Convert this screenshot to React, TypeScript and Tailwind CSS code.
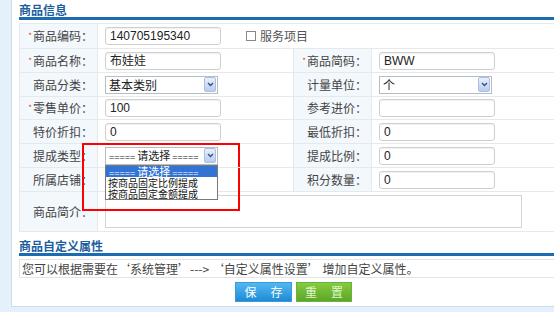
const font = { fontFamily: '"Noto Sans CJK SC", "Liberation Sans", sans-serif' };

function Req() {
  return <span className="mr-[1px] text-[8px] leading-none text-[#e8401c]">*</span>;
}

function Label({ text, req }: { text: string; req?: boolean }) {
  return (
    <div className="flex items-center justify-end border-b border-r border-[#e6e9ec] bg-[#f3f8fd] pr-[4px] text-[12px] text-[#444]">
      {req && <Req />}
      {text}：
    </div>
  );
}

function Input({ value, w = "w-[116px]" }: { value?: string; w?: string }) {
  return (
    <div
      className={`flex h-[18px] ${w} items-center rounded-[3px] border border-[#cfcfcf] bg-white px-[4px] text-[12px] text-[#222] shadow-[inset_0_1px_1px_rgba(0,0,0,0.06)]`}
      style={{ fontFamily: '"Liberation Sans", "Noto Sans CJK SC", sans-serif' }}
    >
      {value}
    </div>
  );
}

const eq = { fontFamily: '"Liberation Sans", sans-serif' };

// "=====" runs in a narrow latin face so the whole label fits like the original
function Pick() {
  return (
    <span className="text-[9px]">
      <span style={eq}>=====</span> <span className="text-[11px]">请选择</span> <span style={eq}>=====</span>
    </span>
  );
}

function Select({ children }: { children: React.ReactNode }) {
  return (
    <div className="flex h-[18px] w-[113px] items-center border border-[#b4bcc6] bg-white text-[12px] text-[#222]">
      <span className="flex-1 whitespace-nowrap pl-[3px]">{children}</span>
      <span className="mr-[1px] flex h-[15px] w-[12px] shrink-0 items-center justify-center rounded-[2px] border border-[#aac0e0] bg-gradient-to-b from-[#e8f0fc] to-[#b8cdf0]">
        <svg width="7" height="5" viewBox="0 0 7 5">
          <path d="M1 1 L3.5 3.5 L6 1" fill="none" stroke="#3a4f7a" strokeWidth="1.4" />
        </svg>
      </span>
    </div>
  );
}

function Value({ children, last }: { children?: React.ReactNode; last?: boolean }) {
  return (
    <div className={`flex items-center border-b border-[#e6e9ec] pl-[7px] ${last ? "" : "border-r"}`}>
      {children}
    </div>
  );
}

export default function App() {
  return (
    <div className="relative h-[312px] w-[554px] overflow-hidden bg-[#e4f0fb]" style={font}>
      <div className="ml-[11px] w-[620px] border-l border-b border-[#cddcea] bg-white pl-[7px] pt-[3px] pb-[4px]">
        <div className="h-[13px] text-[12px] font-bold leading-[13px] text-[#1d5e9e]">商品信息</div>
        <div className="mt-[1px] h-[3px] bg-[#1b6cb3]" />
        <div className="mt-[3px] grid grid-cols-[78px_196px_78px_1fr] grid-rows-[25px_24px_24px_23px_24px_24px_24px_40px] border-t border-l border-[#e6e9ec]">
          <Label text="商品编码" req />
          <div className="col-span-3 flex items-center border-b border-[#e6e9ec] pl-[7px]">
            <Input value="140705195340" />
            <span className="ml-[25px] mr-[4px] h-[10px] w-[10px] border border-[#888] bg-white" />
            <span className="text-[12px] text-[#555]">服务项目</span>
          </div>

          <Label text="商品名称" req />
          <Value>
            <Input value="布娃娃" />
          </Value>
          <Label text="商品简码" req />
          <Value last>
            <Input value="BWW" />
          </Value>

          <Label text="商品分类" />
          <Value>
            <Select>基本类别</Select>
          </Value>
          <Label text="计量单位" />
          <Value last>
            <Select>个</Select>
          </Value>

          <Label text="零售单价" req />
          <Value>
            <Input value="100" />
          </Value>
          <Label text="参考进价" />
          <Value last>
            <Input />
          </Value>

          <Label text="特价折扣" />
          <Value>
            <Input value="0" />
          </Value>
          <Label text="最低折扣" />
          <Value last>
            <Input value="0" />
          </Value>

          <Label text="提成类型" />
          <div className="relative z-10 flex items-center border-b border-r border-[#e6e9ec] pl-[7px]">
            <Select>
              <Pick />
            </Select>
            <div className="absolute left-[7px] top-[21px] w-[113px] border border-[#7a7a7a] bg-white text-[10px] leading-[11px] text-[#111]">
              <div className="h-[11px] bg-[#3373d4] pl-[3px] text-white">
                <Pick />
              </div>
              <div className="h-[11px] pl-[2px]">按商品固定比例提成</div>
              <div className="h-[11px] pl-[2px]">按商品固定金额提成</div>
            </div>
          </div>
          <Label text="提成比例" />
          <Value last>
            <Input value="0" />
          </Value>

          <Label text="所属店铺" />
          <Value />
          <Label text="积分数量" />
          <Value last>
            <Input value="0" />
          </Value>

          <Label text="商品简介" />
          <div className="col-span-3 flex items-center border-b border-[#e6e9ec] pl-[7px]">
            <div className="h-[33px] w-[417px] border border-[#d4d4d4] bg-white" />
          </div>
        </div>

        <div className="mt-[7px] h-[13px] text-[12px] font-bold leading-[13px] text-[#1d5e9e]">商品自定义属性</div>
        <div className="mt-[1px] h-[3px] bg-[#1b6cb3]" />
        <div className="mt-[3px] flex h-[19px] items-center border border-[#e4e4e4] pl-[2px] text-[12px] text-[#444]">
          您可以根据需要在‘系统管理’---&gt; ‘自定义属性设置’ 增加自定义属性。
        </div>
        <div className="mt-[4px] flex gap-[4px] pl-[216px]">
          <button className="flex h-[20px] w-[57px] items-center justify-center gap-[14px] border border-[#3a9ad8] bg-gradient-to-b from-[#52b8f2] to-[#1d8ad6] text-[12px] text-white">
            <span>保</span>
            <span>存</span>
          </button>
          <button className="flex h-[20px] w-[56px] items-center justify-center gap-[14px] border border-[#6bb23a] bg-gradient-to-b from-[#86cc3e] to-[#5ca62a] text-[12px] text-[#dff5c8]">
            <span>重</span>
            <span>置</span>
          </button>
        </div>
      </div>
      <div className="pointer-events-none absolute left-[82px] top-[143px] h-[68px] w-[158px] border-2 border-[#ff0000]" />
    </div>
  );
}
